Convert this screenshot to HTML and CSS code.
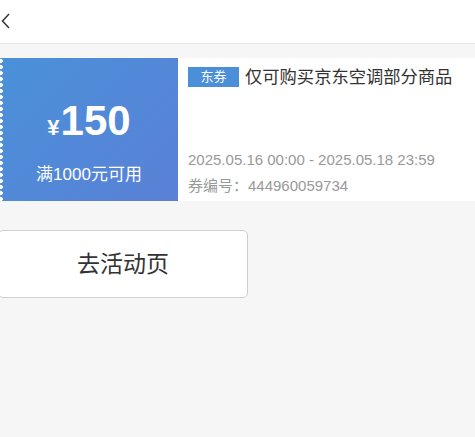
FILE: index.html
```html
<!DOCTYPE html>
<html lang="zh">
<head>
<meta charset="utf-8">
<link rel="stylesheet" href="styles.css">
</head>
<body>
<header class="topbar">
  <svg class="back" width="12" height="18" viewBox="0 0 12 18"><path d="M9 2 L2.5 9 L9 16" fill="none" stroke="#333" stroke-width="1.5"/></svg>
</header>
<main class="page">
  <section class="coupon">
    <div class="coupon-left">
      <div class="amount"><span class="yen">¥</span><span class="num">150</span></div>
      <div class="cond">满1000元可用</div>
    </div>
    <div class="coupon-right">
      <div class="title"><span class="tag">东券</span><span class="desc">仅可购买京东空调部分商品</span></div>
      <div class="meta">
        <div class="date">2025.05.16 00:00 - 2025.05.18 23:59</div>
        <div class="code">券编号：444960059734</div>
      </div>
    </div>
  </section>
  <button class="go">去活动页</button>
</main>
</body>
</html>
```
FILE: styles.css
```css
* { box-sizing: border-box; }
html, body { margin: 0; padding: 0; }
body {
  background: #f6f6f6;
  font-family: "Liberation Sans", "Noto Sans CJK SC", sans-serif;
  width: 475px;
  height: 437px;
  overflow: hidden;
}
.topbar {
  height: 44px;
  background: #fff;
  border-bottom: 1px solid #e6e6e6;
  display: flex;
  align-items: center;
}
.back { display: block; margin-top: -2px; }
.page { padding-top: 14px; }
.coupon {
  display: flex;
  height: 143px;
  background: #fff;
}
.coupon-left {
  position: relative;
  width: 178px;
  background: linear-gradient(135deg, #4a91d9 0%, #5a80d6 100%);
  color: #fff;
  display: flex;
  flex-direction: column;
  align-items: center;
  padding-top: 38px;
}
.coupon-left::before {
  content: "";
  position: absolute;
  left: 0; top: 0; bottom: 0;
  width: 4px;
  background: radial-gradient(circle at 0.5px 3px, #fff 2px, transparent 2.6px) 0 0 / 4px 6px repeat-y;
}
.amount { display: flex; align-items: baseline; margin-left: 0; }
.yen { font-size: 22px; font-weight: bold; margin-right: 1px; }
.num { font-size: 42px; font-weight: bold; line-height: 50px; }
.cond { font-size: 17px; margin-top: 14px; }
.coupon-right {
  flex: 1;
  padding: 8px 0 0 10px;
  display: flex;
  flex-direction: column;
  justify-content: space-between;
}
.title { display: flex; align-items: center; }
.tag {
  background: #4a8fd8;
  color: #fff;
  font-size: 13px;
  width: 51px;
  height: 20px;
  line-height: 20px;
  text-align: center;
  margin-right: 6px;
}
.desc { font-size: 17.3px; color: #333; line-height: 22px; }
.meta { color: #999; font-size: 15px; padding-bottom: 5px; }
.date { line-height: 20px; margin-bottom: 6px; }
.code { line-height: 20px; }
.go {
  display: block;
  margin-top: 29px;
  margin-left: -2px;
  width: 250px;
  height: 68px;
  background: #fff;
  border: 1px solid #cfcfcf;
  border-radius: 5px;
  font-family: "Noto Sans CJK SC", sans-serif;
  font-size: 23px;
  line-height: 30px;
  color: #333;
  padding: 0 0 4px 0;
}
```
